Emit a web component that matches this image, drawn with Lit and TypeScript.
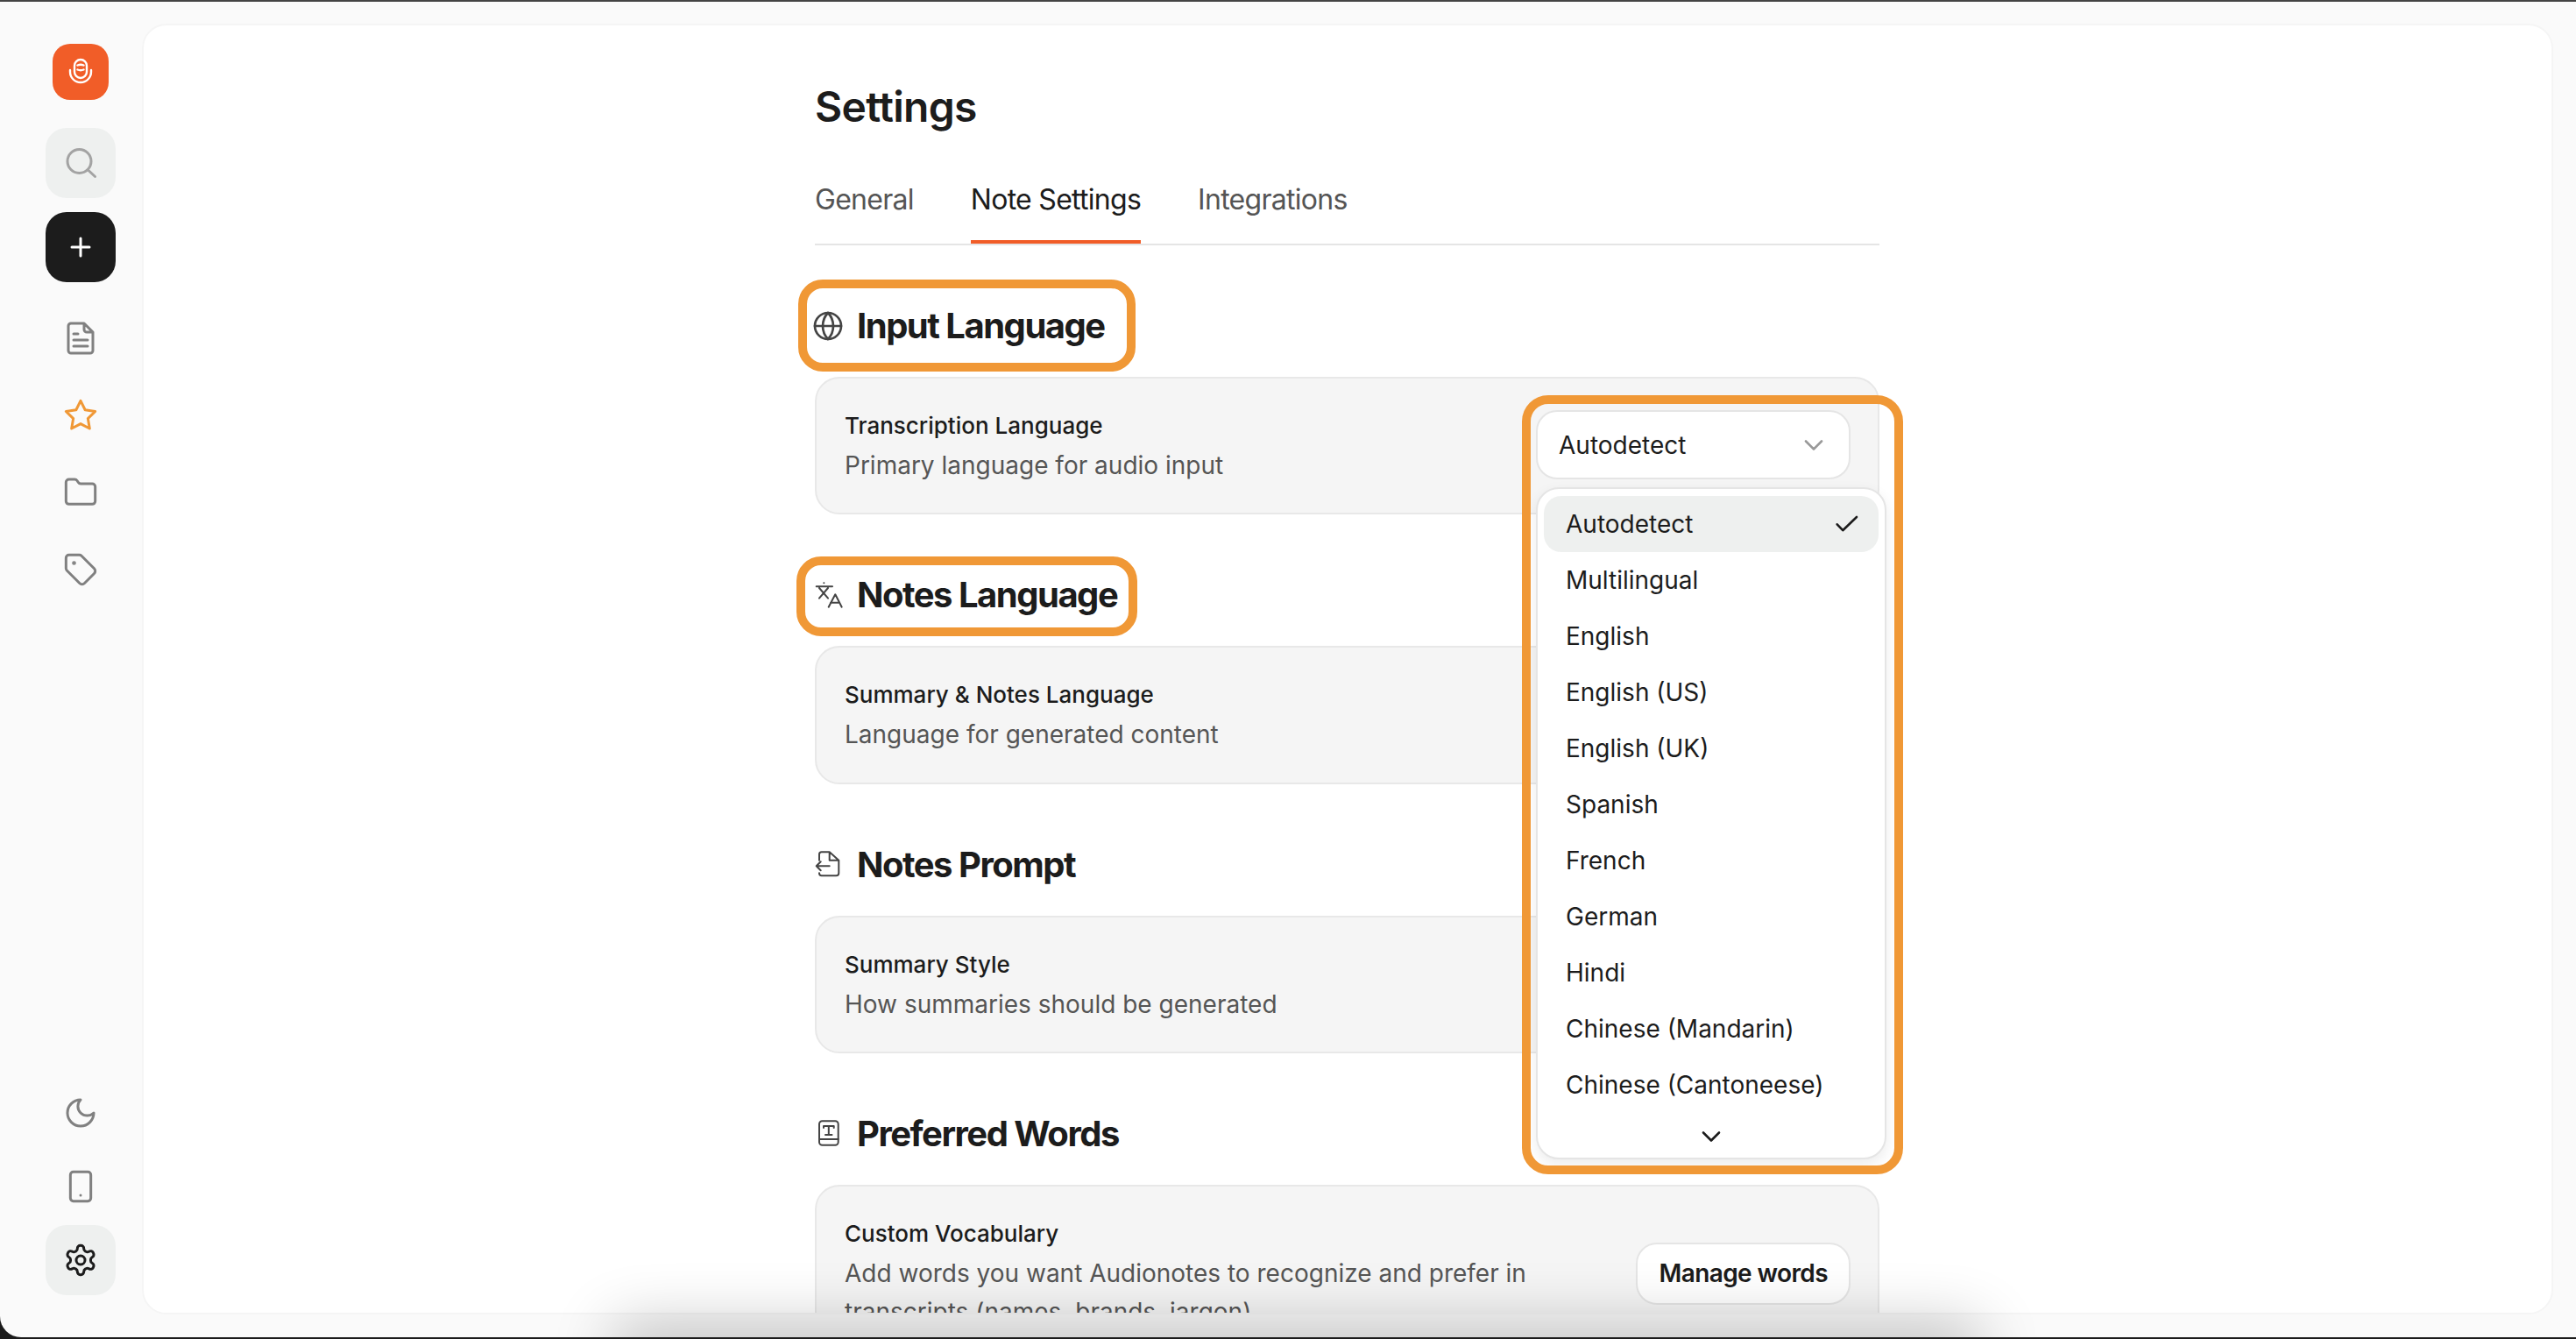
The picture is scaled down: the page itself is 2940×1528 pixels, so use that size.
import { LitElement, html, css, svg } from "lit";
import { customElement } from "lit/decorators.js";

const ic = (body: unknown, cls = "ic") => html`<svg class=${cls} viewBox="0 0 24 24" fill="none" stroke="currentColor" stroke-width="1.8" stroke-linecap="round" stroke-linejoin="round">${body}</svg>`;
const px = (body: unknown, cls = "hic") => html`<svg class=${cls} viewBox="0 0 36 36" fill="none" stroke="currentColor" stroke-width="2" stroke-linecap="round" stroke-linejoin="round">${body}</svg>`;

const LANGS = ["Multilingual", "English", "English (US)", "English (UK)", "Spanish", "French", "German", "Hindi", "Chinese (Mandarin)", "Chinese (Cantoneese)"];

@customElement("app-root")
export class AppRoot extends LitElement {
  static styles = css`
    :host { display: block; width: 2940px; height: 1528px; position: relative; overflow: hidden; background: #1b1b1b; font-family: Inter, "Noto Sans", sans-serif; color: #1c1c1c; }
    .topline { height: 2px; background: #444; }
    .window { height: 1524px; background: #fafafa; border-bottom-left-radius: 24px; display: flex; }
    .side { width: 162px; flex: none; box-sizing: border-box; padding: 48px 0 48px 52px; display: flex; flex-direction: column; color: #808080; }
    .logo { width: 64px; height: 64px; margin: 0 8px 32px; border-radius: 20px; background: #f15d28; color: #fff; display: flex; align-items: center; justify-content: center; }
    .logo svg { width: 40px; height: 40px; }
    .btn { width: 80px; height: 80px; flex: none; border-radius: 24px; display: flex; align-items: center; justify-content: center; }
    .search { background: #eef0ef; color: #a3a3a3; margin-bottom: 16px; }
    .search svg { width: 40px; height: 40px; }
    .plus { background: #1c1c1c; color: #fff; margin-bottom: 20px; }
    .plus svg { width: 40px; height: 40px; }
    .nav { width: 80px; height: 88px; flex: none; display: flex; align-items: center; justify-content: center; }
    .ic { width: 40px; height: 40px; display: block; }
    .star { color: #f09836; }
    .spacer { flex: 1; }
    .low { margin-bottom: 4px; }
    .gear { background: #eef0ef; color: #1c1c1c; }
    .main { flex: 1; margin: 25px 26px 26px 0; background: #fff; border: 2px solid #f5f5f5; border-radius: 28px; overflow: hidden; display: flex; justify-content: flex-start; }
    .col { width: 1215px; flex: none; padding-top: 63px; margin-left: 766px; }
    h1 { margin: 0; font-size: 48px; line-height: 60px; font-weight: 600; letter-spacing: -0.7px; }
    .tabs { display: flex; gap: 65px; margin-top: 58px; border-bottom: 2px solid #e5e5e5; }
    .tab { font-size: 32px; line-height: 36px; padding-bottom: 28px; border-bottom: 4px solid transparent; color: #555; letter-spacing: -0.72px; }
    .tab.on { color: #1c1c1c; border-bottom-color: #f15d28; }
    .head { display: flex; align-items: center; height: 48px; margin-top: 68px; margin-bottom: 34px; }
    .hic { width: 36px; height: 36px; margin: 0 15px 0 -3px; color: #444; flex: none; }
    h2 { margin: 0; font-size: 40px; line-height: 48px; font-weight: 650; letter-spacing: -1.5px; }
    .card { box-sizing: border-box; background: #f5f5f5; border: 2px solid #e8e8e8; border-radius: 28px; padding: 34px 31px 32.33px 32px; display: flex; align-items: center; justify-content: space-between; }
    .label { font-size: 26px; line-height: 40px; font-weight: 500; margin-bottom: 3px; }
    .desc { font-size: 28px; line-height: 44px; color: #555; max-width: 840px; }
    .select { position: relative; align-self: flex-start; margin-top: 2px; box-sizing: border-box; width: 359px; height: 79px; background: #fff; border: 2px solid #e5e5e5; border-radius: 24px; padding: 0 28px 0 24px; display: flex; align-items: center; justify-content: space-between; font-size: 28px; }
    .select > svg { width: 24px; height: 24px; color: #999; }
    .dd { position: absolute; top: 86px; left: -2px; box-sizing: border-box; width: 400px; height: 767px; background: #fff; border: 2px solid #e5e5e5; border-radius: 26px; padding: 8px 7px; box-shadow: 0 6px 16px rgba(0,0,0,.08); z-index: 2; }
    .item { height: 64px; padding: 0 20px 0 25px; border-radius: 20px; display: flex; align-items: center; justify-content: space-between; }
    .item.on { background: #eef0ef; }
    .item svg { width: 32px; height: 32px; }
    .more { height: 54px; display: flex; align-items: center; justify-content: center; }
    .more svg { width: 24px; height: 24px; }
    .mbtn { box-sizing: border-box; height: 71px; padding: 0 24px; background: #fff; border: 2px solid #e5e5e5; border-radius: 24px; display: flex; align-items: center; font-size: 28px; font-weight: 600; letter-spacing: -0.6px; flex: none; }
    .mark { position: absolute; box-sizing: border-box; border: 10px solid #f09836; pointer-events: none; z-index: 3; }
    .m1 { left: 911px; top: 319px; width: 385px; height: 105px; border-radius: 28px; }
    .m2 { left: 909px; top: 635px; width: 389px; height: 91px; border-radius: 28px; }
    .m3 { left: 1737px; top: 451px; width: 435px; height: 889px; border-radius: 30px; }
    .dock { position: absolute; left: 715px; top: 1526px; width: 1530px; height: 40px; background: #1b1b1b; box-shadow: 0 0 70px 14px rgba(0,0,0,.24); z-index: 4; }
    .bottomline { position: absolute; left: 0; right: 0; bottom: 0; height: 2px; background: #1b1b1b; z-index: 5; }
  `;

  section(icon: unknown, title: string, label: string, desc: string, action: unknown = null) {
    return html`
      <div class="head">${icon}<h2>${title}</h2></div>
      <div class="card">
        <div><div class="label">${label}</div><div class="desc">${desc}</div></div>
        ${action}
      </div>`;
  }

  render() {
    const chev = html`<svg viewBox="0 0 24 24" fill="none" stroke="currentColor" stroke-width="2.6" stroke-linecap="round" stroke-linejoin="round"><path d="M3 7.5l9 9 9-9"/></svg>`;
    const select = html`<div class="select"><span>Autodetect</span>${chev}
      <div class="dd">
        <div class="item on"><span>Autodetect</span><svg viewBox="0 0 32 32" fill="none" stroke="currentColor" stroke-width="2.6" stroke-linecap="round" stroke-linejoin="round"><path d="M4.7 16.3l6.5 6.9L27 8"/></svg></div>
        ${LANGS.map((l) => html`<div class="item"><span>${l}</span></div>`)}
        <div class="more">${chev}</div>
      </div></div>`;
    const globe = ic(svg`<circle cx="12" cy="12" r="10"/><path d="M12 2a14.5 14.5 0 0 0 0 20 14.5 14.5 0 0 0 0-20"/><path d="M2 12h20"/>`, "hic");
    const langs = px(svg`<path d="M13.3 4.3h.1M4.7 8.3H23M8 10l10 11.7M18 10L8 21.7M18.7 31.7l7.6-14.4 7.4 14.4M21 26.7h10"/>`);
    const prompt = px(svg`<path d="M8 12.7V6q0-2.7 2.7-2.7h9l10.6 9.4V27.3q0 3-3 3H10.7q-2.7 0-2.7-3M19.7 3.3v9.4h10.6M4.7 19.3h15M9.7 14.3l-5 5 5 5"/>`);
    const book = px(svg`<rect x="8" y="3.3" width="21.7" height="27.4" rx="3.5"/><path d="M8 24h21.7M13 11V9h11.7v2M18.8 9v10M15 19h7.5"/>`);
    return html`
      <div class="topline"></div>
      <div class="window">
        <div class="side">
          <div class="logo"><svg viewBox="0 0 40 40" fill="none" stroke="currentColor" stroke-width="2.4" stroke-linecap="round"><rect x="13" y="6" width="14" height="21" rx="7"/><path d="M16.5 12.5q3.5-1.4 7 0M16.5 17.5q3.5 1.4 7 0M8 18v2a12 12 0 0 0 24 0v-2"/></svg></div>
          <div class="btn search"><svg viewBox="0 0 40 40" fill="none" stroke="currentColor" stroke-width="3" stroke-linecap="round"><circle cx="18.5" cy="18" r="13.5"/><path d="M28.5 28l8 7.5"/></svg></div>
          <div class="btn plus"><svg viewBox="0 0 40 40" fill="none" stroke="currentColor" stroke-width="3" stroke-linecap="round"><path d="M20 10v20M10 20h20"/></svg></div>
          <div class="nav"><svg class="ic" viewBox="0 0 40 40" fill="none" stroke="currentColor" stroke-width="3" stroke-linecap="round" stroke-linejoin="round"><path d="M9 3h15l10 10v21a3 3 0 0 1-3 3H9a3 3 0 0 1-3-3V6a3 3 0 0 1 3-3zM24 3v7a3 3 0 0 0 3 3h7M12 15h5M12 22h16M12 29h16"/></svg></div>
          <div class="nav star">${ic(svg`<path d="M12 2l3.09 6.26L22 9.27l-5 4.87 1.18 6.88L12 17.77l-6.18 3.25L7 14.14 2 9.27l6.91-1.01L12 2z"/>`)}</div>
          <div class="nav">${ic(svg`<path d="M20 20a2 2 0 0 0 2-2V8a2 2 0 0 0-2-2h-7.9a2 2 0 0 1-1.69-.9L9.6 3.9A2 2 0 0 0 7.93 3H4a2 2 0 0 0-2 2v13a2 2 0 0 0 2 2Z"/>`)}</div>
          <div class="nav">${ic(svg`<path d="M12.586 2.586A2 2 0 0 0 11.172 2H4a2 2 0 0 0-2 2v7.172a2 2 0 0 0 .586 1.414l8.704 8.704a2.426 2.426 0 0 0 3.42 0l6.58-6.58a2.426 2.426 0 0 0 0-3.42z"/><circle cx="7.5" cy="7.5" r=".5" fill="currentColor"/>`)}</div>
          <div class="spacer"></div>
          <div class="btn low">${ic(svg`<path d="M12 3a6 6 0 0 0 9 9 9 9 0 1 1-9-9Z"/>`)}</div>
          <div class="btn low">${ic(svg`<rect x="5" y="2" width="14" height="20" rx="2"/><path d="M12 18h.01"/>`)}</div>
          <div class="btn gear">${ic(svg`<path d="M12.22 2h-.44a2 2 0 0 0-2 2v.18a2 2 0 0 1-1 1.73l-.43.25a2 2 0 0 1-2 0l-.15-.08a2 2 0 0 0-2.73.73l-.22.38a2 2 0 0 0 .73 2.73l.15.1a2 2 0 0 1 1 1.72v.51a2 2 0 0 1-1 1.74l-.15.09a2 2 0 0 0-.73 2.73l.22.38a2 2 0 0 0 2.73.73l.15-.08a2 2 0 0 1 2 0l.43.25a2 2 0 0 1 1 1.73V20a2 2 0 0 0 2 2h.44a2 2 0 0 0 2-2v-.18a2 2 0 0 1 1-1.73l.43-.25a2 2 0 0 1 2 0l.15.08a2 2 0 0 0 2.73-.73l.22-.39a2 2 0 0 0-.73-2.73l-.15-.08a2 2 0 0 1-1-1.74v-.5a2 2 0 0 1 1-1.74l.15-.09a2 2 0 0 0 .73-2.73l-.22-.38a2 2 0 0 0-2.73-.73l-.15.08a2 2 0 0 1-2 0l-.43-.25a2 2 0 0 1-1-1.73V4a2 2 0 0 0-2-2z"/><circle cx="12" cy="12" r="3"/>`)}</div>
        </div>
        <div class="main">
          <div class="col">
            <h1>Settings</h1>
            <div class="tabs">
              <div class="tab">General</div>
              <div class="tab on">Note Settings</div>
              <div class="tab">Integrations</div>
            </div>
            ${this.section(globe, "Input Language", "Transcription Language", "Primary language for audio input", select)}
            ${this.section(langs, "Notes Language", "Summary & Notes Language", "Language for generated content")}
            ${this.section(prompt, "Notes Prompt", "Summary Style", "How summaries should be generated")}
            ${this.section(book, "Preferred Words", "Custom Vocabulary", "Add words you want Audionotes to recognize and prefer in transcripts (names, brands, jargon)", html`<div class="mbtn">Manage words</div>`)}
          </div>
        </div>
      </div>
      <div class="mark m1"></div>
      <div class="mark m2"></div>
      <div class="mark m3"></div>
      <div class="dock"></div>
      <div class="bottomline"></div>
    `;
  }
}
